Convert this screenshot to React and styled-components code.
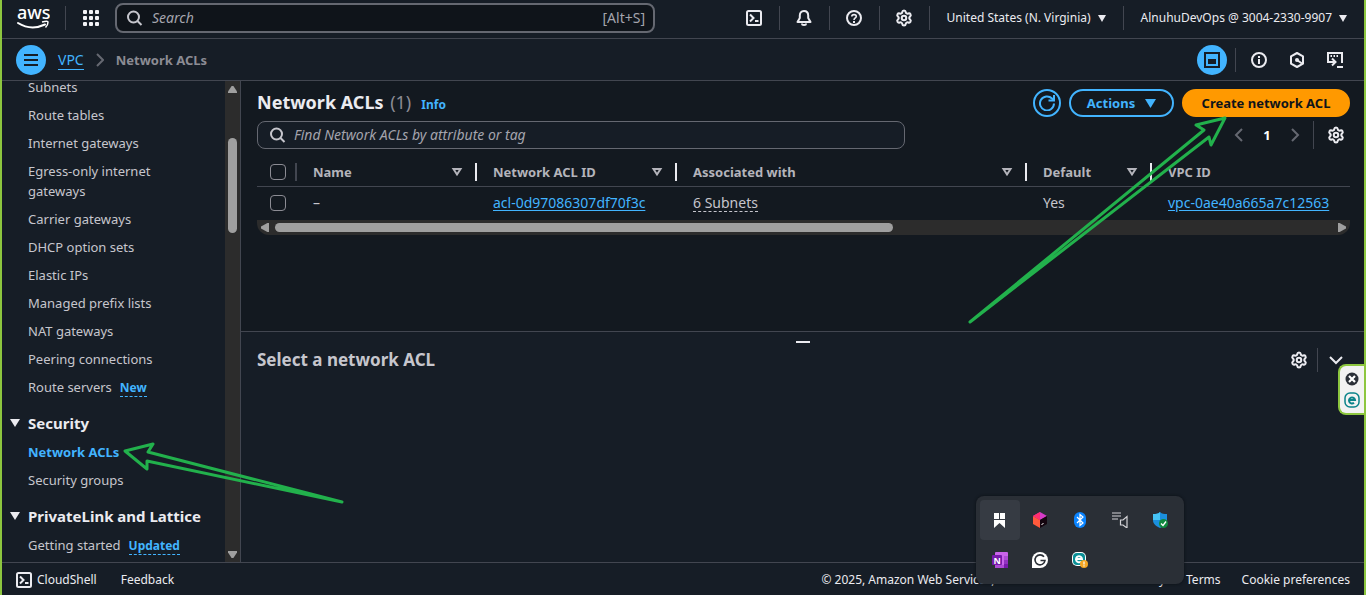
import React from 'react';
import styled, { createGlobalStyle, css } from 'styled-components';
import { Settings } from 'lucide-react';

const c = {
  bar: '#161d26',
  page: '#131920',
  line: '#424650',
  text: '#ebebf0',
  soft: '#c6c6cd',
  muted: '#a4a4ad',
  dim: '#8c8c94',
  blue: '#42b4ff',
  orange: '#ff9900',
  frame: '#8dc63f',
  track: '#2c2c2c',
  thumb: '#9f9f9f',
  pen: '#22b14c',
};

const Global = createGlobalStyle`
  *, *::before, *::after { box-sizing: border-box; }
  body {
    margin: 0;
    background: ${c.bar};
    color: ${c.soft};
    font-family: "Noto Sans", "Open Sans", sans-serif;
    font-size: 13px;
    line-height: 20px;
  }
  button, input { font: inherit; color: inherit; }
  svg { display: block; flex: none; }
`;

const Shell = styled.div`
  position: relative;
  display: flex;
  flex-direction: column;
  height: 100vh;
  overflow: hidden;
  border: solid ${c.frame};
  border-width: 0 2px;
`;

const PlainButton = styled.button`
  display: inline-flex;
  align-items: center;
  justify-content: center;
  gap: 6px;
  margin: 0;
  padding: 0;
  border: 0;
  background: none;
  cursor: pointer;
  white-space: nowrap;
`;

const Link = styled.a`
  color: inherit;
  text-decoration: none;
`;

const Divider = styled.span`
  flex: none;
  width: 1px;
  height: ${(p) => p.$h || 24}px;
  margin-left: ${(p) => p.$gap || 0}px;
  background: ${c.line};
`;

/* ---------- top bar ---------- */

const TopBar = styled.header`
  display: flex;
  flex: none;
  align-items: center;
  height: 39px;
  padding-bottom: 2px;
  border-bottom: 1px solid ${c.line};
  background: ${c.bar};
  color: ${c.text};
`;

const LogoLink = styled(Link)`
  display: flex;
  padding: 0 15px;
`;

const GridButton = styled(PlainButton)`
  width: 49px;
  height: 32px;
`;

const GlobalSearch = styled.label`
  display: flex;
  flex: 0 1 540px;
  align-items: center;
  gap: 9px;
  height: 30px;
  padding: 0 8px 0 10px;
  border: 2px solid #656871;
  border-radius: 8px;
  background: #0f141a;
  color: ${c.soft};
  font-size: 14px;
`;

const SearchInput = styled.input`
  flex: 1;
  min-width: 0;
  padding: 0;
  border: 0;
  outline: 0;
  background: none;
  &::placeholder {
    color: ${c.muted};
    font-style: italic;
    opacity: 1;
  }
`;

const Shortcut = styled.span`
  color: ${c.muted};
`;

const TopTools = styled.div`
  display: flex;
  align-items: center;
  margin-left: auto;
`;

const TopIcon = styled(PlainButton)`
  width: 49px;
  height: 30px;
`;

const TopMenu = styled(PlainButton)`
  gap: 7px;
  height: 30px;
  padding: 0 17px;
  font-size: 12px;
`;

/* ---------- breadcrumb bar ---------- */

const CrumbBar = styled.div`
  display: flex;
  flex: none;
  align-items: center;
  height: 42px;
  padding: 0 21px 0 14px;
  border-bottom: 1px solid ${c.line};
  background: ${c.bar};
`;

const RoundButton = styled(PlainButton)`
  width: 30px;
  height: 30px;
  border-radius: 50%;
  background: ${c.blue};
  color: ${c.bar};
`;

const Crumbs = styled.nav`
  display: flex;
  align-items: center;
  gap: 12px;
  margin-left: 12px;
`;

const CrumbLink = styled(Link)`
  border-bottom: 1px solid ${c.blue};
  color: ${c.blue};
  font-size: 14px;
  line-height: 19px;
`;

const CrumbCurrent = styled.span`
  color: ${c.dim};
  font-weight: 700;
`;

const CrumbTools = styled.div`
  display: flex;
  align-items: center;
  margin-left: auto;
  color: ${c.text};
`;

const CrumbIcon = styled(PlainButton)`
  width: 16px;
  height: 30px;
  margin-left: ${(p) => p.$gap || 22}px;
`;

/* ---------- body ---------- */

const Body = styled.div`
  display: flex;
  flex: 1;
  min-height: 0;
`;

const Sidebar = styled.aside`
  display: flex;
  flex: none;
  width: 239px;
  border-right: 1px solid ${c.line};
  background: ${c.bar};
`;

const Nav = styled.nav`
  flex: 1;
  min-width: 0;
  overflow: hidden;
  padding: 0 32px 0 13px;
`;

const NavList = styled.ul`
  display: flex;
  flex-direction: column;
  gap: 8px;
  margin: ${(p) => (p.$scrolled ? '-4px' : '8px')} 0 15px;
  padding: 0 0 0 13px;
  list-style: none;
`;

const NavLink = styled(Link)`
  ${(p) =>
    p.$active &&
    css`
      color: ${c.blue};
      font-weight: 700;
    `}
`;

const NavBadge = styled(PlainButton)`
  margin-left: 8px;
  border-bottom: 1px dashed ${c.blue};
  color: ${c.blue};
  font-size: 12px;
  font-weight: 700;
  line-height: 17px;
`;

const SectionButton = styled(PlainButton)`
  margin-left: -5px;
  gap: 8px;
  color: ${c.text};
  font-size: 15px;
  font-weight: 700;
  line-height: 22px;
`;

const VTrack = styled.div`
  display: flex;
  flex: none;
  flex-direction: column;
  align-items: center;
  width: 15px;
  padding: 5px 0 4px;
  background: ${c.track};
  color: ${c.thumb};
`;

const VThumb = styled.span`
  width: 9px;
  height: 95px;
  margin: 45px 0 auto;
  border-radius: 5px;
  background: ${c.thumb};
`;

const Main = styled.main`
  display: flex;
  flex: 1;
  flex-direction: column;
  min-width: 0;
  background: ${c.page};
`;

const ListPanel = styled.section`
  flex: 1;
  min-height: 0;
  padding: 8px 14px 0 16px;
`;

const ListHead = styled.div`
  display: flex;
  align-items: center;
  gap: 8px;
  height: 28px;
`;

const Title = styled.h1`
  margin: 0;
  padding-bottom: 2px;
  color: ${c.text};
  font-size: 18px;
  line-height: 24px;
`;

const Count = styled.span`
  margin-left: 2px;
  color: ${c.dim};
  font-weight: 400;
`;

const InfoLink = styled(Link)`
  margin: 4px auto 0 2px;
  color: ${c.blue};
  font-size: 12px;
  font-weight: 700;
`;

const ActionButton = styled(PlainButton)`
  gap: 10px;
  width: ${(p) => p.$w}px;
  height: 28px;
  border: 2px solid ${(p) => (p.$primary ? c.orange : c.blue)};
  border-radius: 14px;
  background: ${(p) => (p.$primary ? c.orange : 'none')};
  color: ${(p) => (p.$primary ? '#0f141a' : c.blue)};
  font-weight: 700;
`;

const FilterRow = styled.div`
  display: flex;
  align-items: center;
  justify-content: space-between;
  margin-top: 4px;
`;

const FilterBox = styled.label`
  display: flex;
  flex: 0 1 648px;
  align-items: center;
  gap: 8px;
  height: 28px;
  padding: 0 12px;
  border: 1px solid #656871;
  border-radius: 8px;
  background: ${c.bar};
  font-size: 14px;
`;

const Pager = styled.div`
  display: flex;
  align-items: center;
  color: ${c.text};
`;

const PageButton = styled(PlainButton)`
  width: 28px;
  height: 28px;
  color: ${(p) => (p.$current ? '#ffffff' : '#656871')};
  font-weight: 700;
`;

const GearButton = styled(PlainButton)`
  width: 28px;
  height: 28px;
  margin-left: ${(p) => p.$gap || 0}px;
`;

const TableFrame = styled.div`
  margin-top: 8px;
  overflow: hidden;
  border-radius: 0 0 12px 12px;
`;

const Table = styled.table`
  width: 100%;
  border-collapse: collapse;
  table-layout: fixed;
  text-align: left;
`;

const Col = styled.col`
  width: ${(p) => (p.$w ? `${p.$w}px` : 'auto')};
`;

const Th = styled.th`
  height: 29px;
  padding: 2px 0 0;
  border-bottom: 1px solid ${c.line};
  color: #b4b4bb;
`;

const ThInner = styled.div`
  display: flex;
  align-items: center;
  justify-content: space-between;
  height: 18px;
  padding: 0 ${(p) => (p.$check ? 9 : 12)}px 0 ${(p) => (p.$check ? 13 : 16)}px;
  border-right: ${(p) => (p.$last ? 0 : 2)}px solid ${(p) => (p.$check ? c.line : c.text)};
`;

const Td = styled.td`
  height: 34px;
  padding: 0 16px;
  font-size: 14px;
  white-space: nowrap;
  &:first-child { padding: 0 13px; }
`;

const Check = styled.input`
  display: block;
  appearance: none;
  width: 16px;
  height: 16px;
  margin: 0;
  border: 1px solid ${c.dim};
  border-radius: 4px;
`;

const CellLink = styled(Link)`
  color: ${c.blue};
  text-decoration: underline;
  text-underline-offset: 2px;
`;

const DashedButton = styled(PlainButton)`
  border-bottom: 1px dashed ${c.soft};
  line-height: 17px;
`;

const HTrack = styled.div`
  display: flex;
  align-items: center;
  height: 15px;
  padding: 0 4px;
  background: ${c.track};
  color: ${c.thumb};
`;

const HThumb = styled.span`
  flex: 0 1 618px;
  height: 9px;
  margin: 0 auto 0 6px;
  border-radius: 5px;
  background: ${c.thumb};
`;

const SplitPanel = styled.section`
  flex: none;
  height: 231px;
  border-top: 1px solid ${c.line};
  background: ${c.bar};
`;

const Handle = styled.button`
  display: block;
  width: 14px;
  height: 2px;
  margin: 9px auto 3px;
  padding: 0;
  border: 0;
  background: ${c.text};
`;

const SplitHead = styled.div`
  display: flex;
  align-items: center;
  padding: 0 14px 0 16px;
  color: ${c.text};
`;

const SplitTitle = styled.h2`
  margin: 0 auto 0 0;
  color: ${c.soft};
  font-size: 17px;
  line-height: 26px;
`;

/* ---------- footer ---------- */

const Footer = styled.footer`
  display: flex;
  flex: none;
  align-items: center;
  justify-content: space-between;
  height: 33px;
  padding: 2px 14px 0;
  border-top: 1px solid ${c.line};
  background: ${c.bar};
  color: ${c.text};
  font-size: 12px;
  white-space: nowrap;
`;

const FooterGroup = styled.div`
  display: flex;
  align-items: center;
  gap: ${(p) => p.$gap}px;
`;

const FooterButton = styled(PlainButton)`
  gap: 5px;
`;

/* ---------- overlays ---------- */

const Tray = styled.div`
  position: absolute;
  right: 180px;
  bottom: 11px;
  z-index: 2;
  display: grid;
  grid-template-columns: repeat(5, 40px);
  grid-auto-rows: 40px;
  padding: 4px;
  border-radius: 8px;
  background: #2a2f36;
  box-shadow: 0 0 3px #0b0f14;
`;

const TrayButton = styled(PlainButton)`
  border-radius: 4px;
  background: ${(p) => (p.$active ? '#363b43' : 'none')};
`;

const SideWidget = styled.div`
  position: absolute;
  top: 364px;
  right: 0;
  z-index: 2;
  display: flex;
  flex-direction: column;
  align-items: center;
  gap: 6px;
  width: 26px;
  height: 51px;
  padding: 6px 0 0;
  border: 2px solid ${c.frame};
  border-right: 0;
  border-radius: 8px 0 0 8px;
  background: #f2f2f2;
`;

const Arrow = styled.svg`
  position: absolute;
  z-index: 1;
  fill: none;
  stroke: ${c.pen};
  stroke-width: 3;
  stroke-linejoin: round;
  pointer-events: none;
`;

const CreateArrow = styled(Arrow)`
  top: 110px;
  right: 132px;
`;

const NavArrow = styled(Arrow)`
  bottom: 85px;
  left: 116px;
`;

/* ---------- icons ---------- */

const Icon = ({ size = 16, w = 2, children }) => (
  <svg width={size} height={size} viewBox="0 0 16 16" fill="none" stroke="currentColor" strokeWidth={w} aria-hidden="true">
    {children}
  </svg>
);

const Gear = () => <Settings size={18} strokeWidth={2.7} aria-hidden="true" />;

const AwsLogo = () => (
  <svg width="33" height="38" viewBox="0 0 33 38" role="img" aria-label="AWS">
    <text x="0" y="20" fill="#fff" fontSize="18" fontWeight="500" fontFamily="Noto Sans, sans-serif">aws</text>
    <path d="M1 24Q14 32 28 25.500" fill="none" stroke="#fff" strokeWidth="2" strokeLinecap="round" />
    <path d="M25 23Q31 21.500 31 23Q31 26 28.500 28.500" fill="none" stroke="#fff" strokeWidth="1.500" />
  </svg>
);

const GridIcon = () => (
  <svg width="16" height="16" viewBox="0 0 16 16" fill="#f3f3f7" aria-hidden="true">
    {[0, 6, 12].map((y) => [0, 6, 12].map((x) => <rect key={`${x}-${y}`} x={x} y={y} width="4" height="4" rx="1" />))}
  </svg>
);

const SearchIcon = () => (
  <Icon>
    <circle cx="6.500" cy="7" r="5.500" />
    <path d="M10.500 11l4 4" />
  </Icon>
);

const ShellIcon = () => (
  <Icon>
    <rect x="1" y="1" width="14" height="14" rx="1.500" />
    <path d="M4 4.500L7.500 8L4 11.500M9 11h3.500" />
  </Icon>
);

const BellIcon = () => (
  <Icon>
    <path d="M8 1C5 1 3.800 3 3.800 5.500V8L1.500 12h13L12.200 8V5.500C12.200 3 11 1 8 1z" strokeLinejoin="round" />
    <path d="M6 13.500a2 1.500 0 0 0 4 0" />
  </Icon>
);

const HelpIcon = () => (
  <Icon>
    <circle cx="8" cy="8" r="7" />
    <path d="M5.800 6.500C5.800 4 10.300 4 10.300 6.500C10.300 8 8 8 8 10" strokeWidth="1.600" />
    <path d="M7 11h2v2H7z" fill="currentColor" stroke="none" />
  </Icon>
);

const InfoIcon = () => (
  <Icon>
    <circle cx="8" cy="8" r="7" />
    <path d="M8 7v5M8 4v2" />
  </Icon>
);

const HexIcon = () => (
  <Icon>
    <path d="M8 1L14 4.300V11.700L8 15L2 11.700V4.300z" strokeLinejoin="round" />
    <circle cx="8" cy="8" r="2" fill="currentColor" stroke="none" />
    <path d="M8 8l5 3.500" />
  </Icon>
);

const TerminalPanelIcon = () => (
  <Icon>
    <path d="M1 11V1h14v10" />
    <path d="M3.500 4h1.500M6.500 4h1.500M9.500 4h1.500" />
    <path d="M2 10h6M5 6.500L8.500 10L5 13.500M10 15h6" />
  </Icon>
);

const PanelIcon = () => (
  <Icon>
    <rect x="1" y="1" width="14" height="14" />
    <rect x="4" y="7" width="8" height="5" fill="currentColor" stroke="none" />
  </Icon>
);

const BurgerIcon = () => (
  <Icon>
    <path d="M1 3h14M1 8h14M1 13h14" />
  </Icon>
);

const RefreshIcon = () => (
  <Icon>
    <path d="M15 8.500A7 7 0 1 1 13 3.500L14.500 5" />
    <path d="M15 0v5.500H9.500" />
  </Icon>
);

const Chevron = ({ d }) => (
  <Icon>
    <path d={d} />
  </Icon>
);
const LEFT = 'M11 2L5 8L11 14';
const RIGHT = 'M5 2L11 8L5 14';
const DOWN = 'M2 5L8 11L14 5';

const CrumbChevron = () => (
  <svg width="8" height="14" viewBox="0 0 8 14" fill="none" stroke="#656871" strokeWidth="2" aria-hidden="true">
    <path d="M1 1l6 6-6 6" />
  </svg>
);

const Caret = ({ w = 8, h = 7, d = 'M0 0H10L5 10z' }) => (
  <svg width={w} height={h} viewBox="0 0 10 10" preserveAspectRatio="none" fill="currentColor" aria-hidden="true">
    <path d={d} />
  </svg>
);

const SortIcon = () => (
  <svg width="12" height="10" viewBox="0 0 12 10" fill="none" stroke="currentColor" strokeWidth="2" aria-hidden="true">
    <path d="M2.500 2H9.500L6 7.500z" />
  </svg>
);

const trayIcons = [
  {
    name: 'Bookmarks',
    art: <path d="M2 1h5v6H2zM8 1h5v6H8zM2 8h11v8l-5.500-5L2 16z" fill="#fff" />,
  },
  {
    name: 'Toolbox',
    art: (
      <>
        <path d="M8 0l7 4-7 4-7-4z" fill="#d63bc8" />
        <path d="M1 4l7 4v8l-7-4z" fill="#ff5a3c" />
        <path d="M1 4l7-4v8z" fill="#ff2d6e" />
        <path d="M15 4l-7 4v8l7-4z" fill="#14060f" />
        <path d="M9.500 12.500l2-1" stroke="#fff" />
      </>
    ),
  },
  {
    name: 'Bluetooth',
    art: (
      <>
        <rect x="2" width="12" height="16" rx="6" fill="#0a84ff" />
        <path d="M5 5l6 6-3 2.500v-11L11 5l-6 6" fill="none" stroke="#fff" strokeWidth="1.200" />
      </>
    ),
  },
  {
    name: 'Audio',
    art: (
      <path d="M0 1h9M0 4h9M0 7h6M8.500 8v5h2.500l4 3V4.500L11 8z" fill="none" stroke="#d4d4d8" strokeWidth="1.200" />
    ),
  },
  {
    name: 'Security',
    art: (
      <>
        <path d="M8 0c2 2 4 2 7 2v6c0 4-3 6-7 8c-4-2-7-4-7-8V2c3 0 5 0 7-2z" fill="#1b8fdd" />
        <path d="M8 0v8H1V2c3 0 5 0 7-2z" fill="#46c3f5" />
        <circle cx="11.500" cy="11.500" r="4.500" fill="#10893e" />
        <path d="M9 11.500l2 2 3-4" fill="none" stroke="#fff" strokeWidth="1.300" />
      </>
    ),
  },
  {
    name: 'OneNote',
    art: (
      <>
        <rect x="3" width="13" height="16" rx="1" fill="#ca64ea" />
        <path d="M12 4h4v4h-4z" fill="#ae4bd5" />
        <path d="M12 8h4v4h-4z" fill="#9332bf" />
        <path d="M3 13h9v3H3z" fill="#ae4bd5" />
        <path d="M12 12h4v4h-4z" fill="#7719aa" />
        <rect y="3" width="10" height="10" rx="1" fill="#7719aa" />
        <text x="1.500" y="11.500" fill="#fff" fontSize="9" fontWeight="700">N</text>
      </>
    ),
  },
  {
    name: 'Grammarly',
    art: (
      <>
        <path d="M8 0a8 8 0 1 1 0 16H0V8a8 8 0 0 1 8-8z" fill="#fff" />
        <path d="M12 4.800A5 5 0 1 0 13 8.500H8.500" fill="none" stroke="#2a2f36" strokeWidth="1.600" />
      </>
    ),
  },
  {
    name: 'Antivirus',
    art: (
      <>
        <rect width="14" height="14" rx="5" fill="#fff" />
        <rect x="1" y="1" width="12" height="12" rx="4" fill="#0a8f96" />
        <path d="M4 7h6a3 3 0 1 0-1 2.500" fill="none" stroke="#fff" strokeWidth="2" />
        <circle cx="12" cy="12" r="4" fill="#f5a623" />
        <path d="M12 9.500v3M12 13.200v1.200" stroke="#fff" strokeWidth="1.200" />
      </>
    ),
  },
];

/* ---------- data ---------- */

const vpcLinks = [
  { label: 'Subnets' },
  { label: 'Route tables' },
  { label: 'Internet gateways' },
  { label: 'Egress-only internet gateways' },
  { label: 'Carrier gateways' },
  { label: 'DHCP option sets' },
  { label: 'Elastic IPs' },
  { label: 'Managed prefix lists' },
  { label: 'NAT gateways' },
  { label: 'Peering connections' },
  { label: 'Route servers', badge: 'New' },
];

const sections = [
  { title: 'Security', links: [{ label: 'Network ACLs', active: true }, { label: 'Security groups' }] },
  { title: 'PrivateLink and Lattice', links: [{ label: 'Getting started', badge: 'Updated' }] },
];

const columns = [
  { label: 'Name', w: 180 },
  { label: 'Network ACL ID', w: 200 },
  { label: 'Associated with', w: 350 },
  { label: 'Default', w: 125 },
  { label: 'VPC ID' },
];

const Links = ({ items, scrolled }) => (
  <NavList $scrolled={scrolled}>
    {items.map((item) => (
      <li key={item.label}>
        <NavLink href="#" $active={item.active} aria-current={item.active ? 'page' : undefined}>
          {item.label}
        </NavLink>
        {item.badge && <NavBadge type="button">{item.badge}</NavBadge>}
      </li>
    ))}
  </NavList>
);

export default function App() {
  return (
    <Shell>
      <Global />
      <TopBar>
        <LogoLink href="#"><AwsLogo /></LogoLink>
        <Divider />
        <GridButton type="button" aria-label="Services"><GridIcon /></GridButton>
        <GlobalSearch>
          <SearchIcon />
          <SearchInput type="text" placeholder="Search" aria-label="Search" />
          <Shortcut>[Alt+S]</Shortcut>
        </GlobalSearch>
        <TopTools>
          <TopIcon type="button" aria-label="CloudShell"><ShellIcon /></TopIcon>
          <Divider />
          <TopIcon type="button" aria-label="Notifications"><BellIcon /></TopIcon>
          <Divider />
          <TopIcon type="button" aria-label="Help"><HelpIcon /></TopIcon>
          <Divider />
          <TopIcon type="button" aria-label="Settings"><Gear /></TopIcon>
          <Divider />
          <TopMenu type="button">United States (N. Virginia) <Caret /></TopMenu>
          <Divider />
          <TopMenu type="button">AlnuhuDevOps @ 3004-2330-9907 <Caret /></TopMenu>
        </TopTools>
      </TopBar>

      <CrumbBar>
        <RoundButton type="button" aria-label="Navigation"><BurgerIcon /></RoundButton>
        <Crumbs aria-label="Breadcrumb">
          <CrumbLink href="#">VPC</CrumbLink>
          <CrumbChevron />
          <CrumbCurrent>Network ACLs</CrumbCurrent>
        </Crumbs>
        <CrumbTools>
          <RoundButton type="button" aria-label="Split panel"><PanelIcon /></RoundButton>
          <Divider $gap={8} />
          <CrumbIcon type="button" $gap={15} aria-label="Info"><InfoIcon /></CrumbIcon>
          <CrumbIcon type="button" aria-label="Diagnostics"><HexIcon /></CrumbIcon>
          <CrumbIcon type="button" aria-label="Console"><TerminalPanelIcon /></CrumbIcon>
        </CrumbTools>
      </CrumbBar>

      <Body>
        <Sidebar>
          <Nav aria-label="VPC">
            <Links items={vpcLinks} scrolled />
            {sections.map((s) => (
              <React.Fragment key={s.title}>
                <SectionButton type="button"><Caret w={10} h={8} />{s.title}</SectionButton>
                <Links items={s.links} />
              </React.Fragment>
            ))}
          </Nav>
          <VTrack aria-hidden="true">
            <Caret w={9} h={7} d="M0 10V8L4 0H6L10 8V10z" />
            <VThumb />
            <Caret w={9} h={7} d="M0 0V2L4 10H6L10 2V0z" />
          </VTrack>
        </Sidebar>

        <Main>
          <ListPanel>
            <ListHead>
              <Title>Network ACLs <Count>(1)</Count></Title>
              <InfoLink href="#">Info</InfoLink>
              <ActionButton type="button" $w={28} aria-label="Refresh"><RefreshIcon /></ActionButton>
              <ActionButton type="button" $w={105}>Actions <Caret w={11} h={9} /></ActionButton>
              <ActionButton type="button" $w={168} $primary>Create network ACL</ActionButton>
            </ListHead>
            <FilterRow>
              <FilterBox>
                <SearchIcon />
                <SearchInput type="text" placeholder="Find Network ACLs by attribute or tag" aria-label="Find Network ACLs" />
              </FilterBox>
              <Pager>
                <PageButton type="button" aria-label="Previous page"><Chevron d={LEFT} /></PageButton>
                <PageButton type="button" $current>1</PageButton>
                <PageButton type="button" aria-label="Next page"><Chevron d={RIGHT} /></PageButton>
                <Divider $h={28} $gap={4} />
                <GearButton type="button" $gap={8} aria-label="Preferences"><Gear /></GearButton>
              </Pager>
            </FilterRow>
            <TableFrame>
              <Table>
                <colgroup>
                  <Col $w={40} />
                  {columns.map((col) => <Col key={col.label} $w={col.w} />)}
                </colgroup>
                <thead>
                  <tr>
                    <Th scope="col">
                      <ThInner $check><Check type="checkbox" aria-label="Select all" /></ThInner>
                    </Th>
                    {columns.map((col) => (
                      <Th scope="col" key={col.label}>
                        <ThInner $last={!col.w}>
                          {col.label}
                          {col.w && <PlainButton type="button" aria-label={`Sort by ${col.label}`}><SortIcon /></PlainButton>}
                        </ThInner>
                      </Th>
                    ))}
                  </tr>
                </thead>
                <tbody>
                  <tr>
                    <Td><Check type="checkbox" aria-label="Select acl-0d97086307df70f3c" /></Td>
                    <Td>–</Td>
                    <Td><CellLink href="#">acl-0d97086307df70f3c</CellLink></Td>
                    <Td><DashedButton type="button">6 Subnets</DashedButton></Td>
                    <Td>Yes</Td>
                    <Td><CellLink href="#">vpc-0ae40a665a7c12563</CellLink></Td>
                  </tr>
                </tbody>
              </Table>
              <HTrack aria-hidden="true">
                <Caret w={8} h={9} d="M10 0V10H8L0 6V4L8 0z" />
                <HThumb />
                <Caret w={8} h={9} d="M0 0V10H2L10 6V4L2 0z" />
              </HTrack>
            </TableFrame>
          </ListPanel>

          <SplitPanel>
            <Handle type="button" aria-label="Resize panel" />
            <SplitHead>
              <SplitTitle>Select a network ACL</SplitTitle>
              <GearButton type="button" aria-label="Panel preferences"><Gear /></GearButton>
              <Divider $gap={4} />
              <GearButton type="button" $gap={4} aria-label="Collapse panel"><Chevron d={DOWN} /></GearButton>
            </SplitHead>
          </SplitPanel>
        </Main>
      </Body>

      <Footer>
        <FooterGroup $gap={24}>
          <FooterButton type="button"><ShellIcon />CloudShell</FooterButton>
          <Link href="#">Feedback</Link>
        </FooterGroup>
        <FooterGroup $gap={21}>
          <span>© 2025, Amazon Web Services, Inc. or its affiliates.</span>
          <Link href="#">Privacy</Link>
          <Link href="#">Terms</Link>
          <Link href="#">Cookie preferences</Link>
        </FooterGroup>
      </Footer>

      <CreateArrow width="270" height="220" viewBox="962 110 270 220" aria-hidden="true">
        <path d="M970 322L1204 130L1196 125L1225 118L1211 145L1209 137z" />
      </CreateArrow>
      <NavArrow width="230" height="72" viewBox="118 438 230 72" aria-hidden="true">
        <path d="M342 502L148 452L153 444L125 451L147 469L147 461z" />
      </NavArrow>

      <SideWidget>
        <PlainButton type="button" aria-label="Close">
          <svg width="14" height="14" viewBox="0 0 14 14" aria-hidden="true">
            <circle cx="7" cy="7" r="6.500" fill="#2b3038" />
            <path d="M4 4l6 6M10 4l-6 6" stroke="#fff" strokeWidth="2.200" />
          </svg>
        </PlainButton>
        <PlainButton type="button" aria-label="Antivirus panel">
          <svg width="16" height="16" viewBox="0 0 16 16" fill="none" stroke="#0a8389" aria-hidden="true">
            <rect x="1" y="1" width="14" height="14" rx="5" strokeWidth="1.500" />
            <path d="M5 8h6a3 3 0 1 0-1 2.700" strokeWidth="2" />
          </svg>
        </PlainButton>
      </SideWidget>

      <Tray>
        {trayIcons.map((t, i) => (
          <TrayButton type="button" key={t.name} $active={i === 0} aria-label={t.name}>
            <svg width="16" height="16" viewBox="0 0 16 16" aria-hidden="true">{t.art}</svg>
          </TrayButton>
        ))}
      </Tray>
    </Shell>
  );
}
